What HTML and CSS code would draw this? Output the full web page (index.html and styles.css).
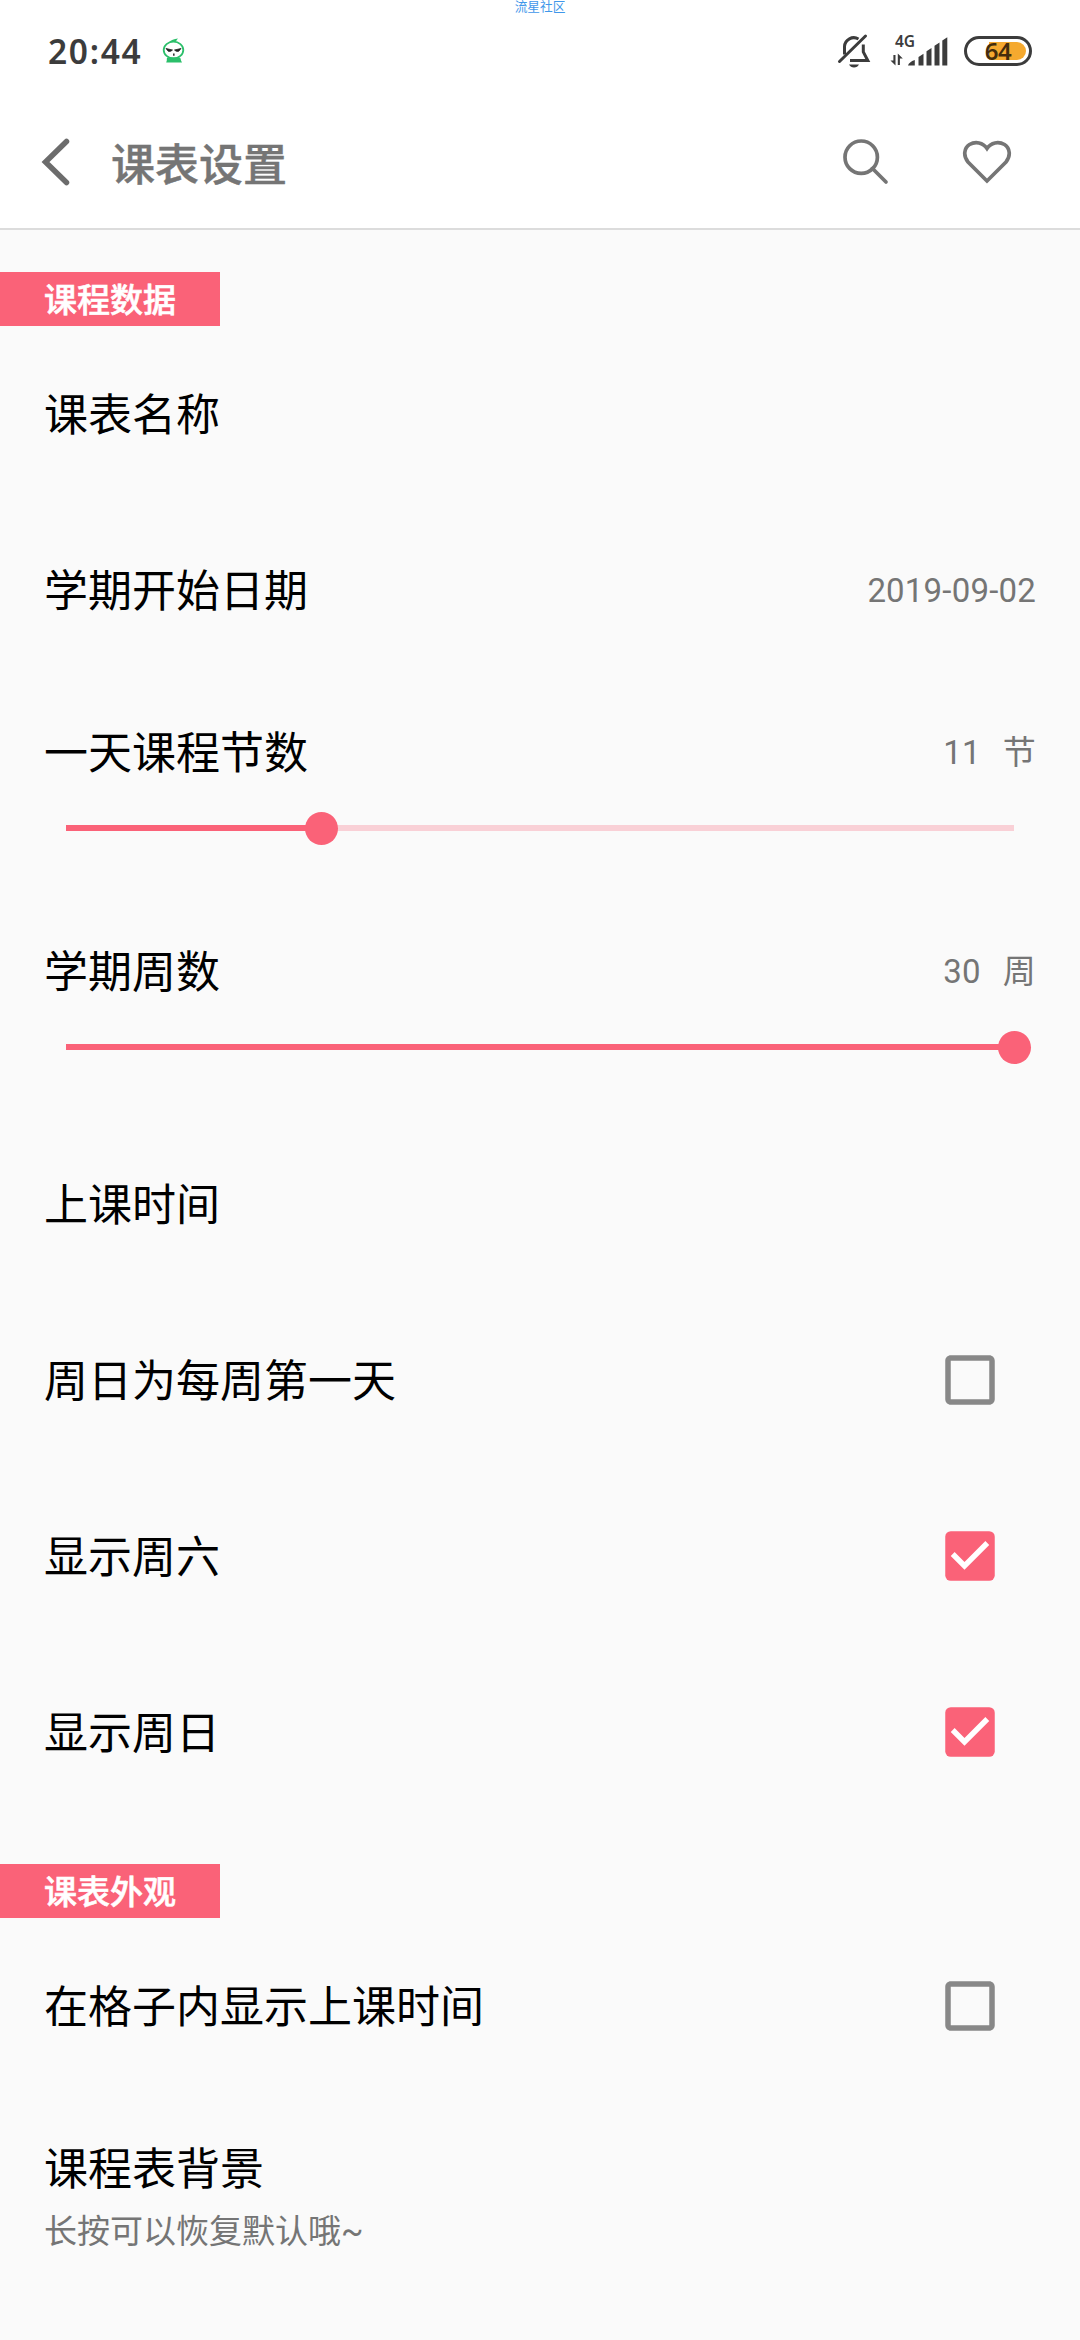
FILE: index.html
```html
<!DOCTYPE html>
<html lang="zh-CN">
<head>
<meta charset="utf-8">
<title>课表设置</title>
<link rel="stylesheet" href="styles.css">
</head>
<body>
<div class="watermark">流星社区</div>
<header class="top">
  <div class="statusbar">
    <span class="clock">20:44</span>
    <svg class="mascot" width="24" height="26" viewBox="0 0 24 26">
      <path d="M7 4.500Q10 1 16 .6Q14.500 2 14 3.500L10 5z" fill="#2bbf6a"/>
      <ellipse cx="11.500" cy="12" rx="9.800" ry="8.300" fill="#fff" stroke="#2bbf6a" stroke-width="1.800"/>
      <path d="M5 19.500h13q.8 1 1 3l1 2H4.200l.6-2q0-2 .2-3z" fill="#2bbf6a"/>
      <path d="M4 10.500l6.500 1.500q-1.500 2-4.300 1.200zM19 10.500L12.500 12q1.500 2 4.300 1.200z" fill="#222" stroke="#222" stroke-width=".8"/>
      <path d="M11 15.500h1.600v2.200H11z" fill="#333"/>
    </svg>
    <span class="spacer"></span>
    <svg class="bell" width="34" height="36" viewBox="0 0 34 36" fill="none" stroke="#3c3c3c" stroke-width="3">
      <path d="M7.500 21.500V13.500A9.300 9.300 0 0 1 21.500 6M26.300 11.500V19l4.500 8.500H13"/>
      <path d="M2.500 28.500L28.500 3" stroke-linecap="round"/>
      <path d="M12 31.500h10q-1.500 3-5 3t-5-3z" fill="#3c3c3c" stroke="none"/>
    </svg>
    <span class="network">
      <span class="network-type">4G</span>
      <svg width="58" height="34" viewBox="0 0 58 34" fill="#3c3c3c">
        <path d="M5.500 21V31.500L.5 26.500H3.400V21zM7.800 31V19.500l5 5H9.900V31z"/>
        <path d="M18 31.500Q19 28 24.800 26V31.500zM28.500 23l5-3.200V31.500h-5zM36.500 17.200l5-3.200V31.500h-5zM44.500 11.700l5-3.200V31.500h-5zM52.300 6.400l5-3.200V31.500h-5z"/>
      </svg>
    </span>
    <span class="battery"><span class="battery-fill"></span><span class="battery-text">64</span></span>
  </div>
  <div class="appbar">
    <svg class="back" width="30" height="50" viewBox="0 0 30 50" fill="none" stroke="#6c6c6c" stroke-width="5.500" stroke-linecap="round"><path d="M25.500 4.500L4.500 25l21 20.500"/></svg>
    <h1 class="title">课表设置</h1>
    <svg class="search" width="46" height="46" viewBox="0 0 46 46" fill="none" stroke="#757575" stroke-width="3.700"><circle cx="18.200" cy="18.200" r="16.200"/><path d="M29.500 29.500L43 43" stroke-linecap="round"/></svg>
    <svg class="heart" width="50" height="44" viewBox="0 0 50 44" fill="none" stroke="#757575" stroke-width="3.700"><path d="M25 41L6 22C1 16 2 8 7.500 4.500C13.500 1 21 2.500 25 8.500C29 2.500 36.500 1 42.500 4.500C48 8 49 16 44 22z"/></svg>
  </div>
</header>
<main class="content">
  <section class="group">
    <h2 class="tag">课程数据</h2>
    <div class="row"><span class="label">课表名称</span></div>
    <div class="row"><span class="label">学期开始日期</span><span class="value">2019-09-02</span></div>
    <div class="row-slider">
      <div class="line"><span class="label">一天课程节数</span><span class="value">11<span class="unit">节</span></span></div>
      <div class="track"><div class="fill" style="width: 26.900%"><span class="thumb"></span></div></div>
    </div>
    <div class="row-slider">
      <div class="line"><span class="label">学期周数</span><span class="value">30<span class="unit">周</span></span></div>
      <div class="track"><div class="fill" style="width: 100%"><span class="thumb"></span></div></div>
    </div>
    <div class="row"><span class="label">上课时间</span></div>
    <div class="row"><span class="label">周日为每周第一天</span>
      <svg class="check" viewBox="0 0 24 24"><path d="M19 5v14H5V5h14m0-2H5c-1.100 0-2 .9-2 2v14c0 1.100.9 2 2 2h14c1.100 0 2-.9 2-2V5c0-1.100-.9-2-2-2z"/></svg></div>
    <div class="row"><span class="label">显示周六</span>
      <svg class="check checked" viewBox="0 0 24 24"><rect x="3" y="3" width="18" height="18" rx="2"/><path class="tick" d="M10 17l-5-5 1.410-1.410L10 14.170l7.590-7.590L19 8z"/></svg></div>
    <div class="row"><span class="label">显示周日</span>
      <svg class="check checked" viewBox="0 0 24 24"><rect x="3" y="3" width="18" height="18" rx="2"/><path class="tick" d="M10 17l-5-5 1.410-1.410L10 14.170l7.590-7.590L19 8z"/></svg></div>
  </section>
  <section class="group">
    <h2 class="tag">课表外观</h2>
    <div class="row"><span class="label">在格子内显示上课时间</span>
      <svg class="check" viewBox="0 0 24 24"><path d="M19 5v14H5V5h14m0-2H5c-1.100 0-2 .9-2 2v14c0 1.100.9 2 2 2h14c1.100 0 2-.9 2-2V5c0-1.100-.9-2-2-2z"/></svg></div>
    <div class="row-detail"><span class="label">课程表背景</span><span class="hint">长按可以恢复默认哦~</span></div>
  </section>
</main>
</body>
</html>
```
FILE: styles.css
```css
* { box-sizing: border-box; }
body {
  margin: 0;
  width: 1080px;
  height: 2340px;
  overflow: hidden;
  background: #fafafa;
  color: #000;
  font-family: Roboto, "Noto Sans CJK SC", sans-serif;
}
svg { display: block; flex: none; }

.watermark {
  position: absolute;
  top: 0;
  left: 0;
  width: 1080px;
  text-align: center;
  font-size: 12.700px;
  line-height: 13px;
  color: #3f97ea;
}

.top {
  height: 230px;
  background: #fff;
  border-bottom: 2px solid #dcdcdc;
}
.statusbar {
  display: flex;
  align-items: center;
  height: 102px;
  padding: 0 48px;
}
.clock {
  font: 600 33.500px/40px "Noto Sans", sans-serif;
  letter-spacing: 1.700px;
  color: #3c3c3c;
}
.mascot { margin-left: 20px; }
.spacer { flex: 1; }
.bell { margin-right: 19px; }
.network { position: relative; margin-right: 16px; }
.network-type {
  position: absolute;
  left: 5px;
  top: -2px;
  font: 600 15.500px/18px "Noto Sans", sans-serif;
  color: #3c3c3c;
}
.battery {
  position: relative;
  display: flex;
  align-items: center;
  justify-content: center;
  width: 68px;
  height: 30px;
  border: 3px solid #3c3c3c;
  border-radius: 15px;
}
.battery-fill {
  position: absolute;
  right: 3px;
  top: 3px;
  width: 37px;
  height: 18px;
  border-radius: 0 9px 9px 0;
  background: #f5a92f;
}
.battery-text {
  position: relative;
  font: 600 24px/24px "Noto Sans", sans-serif;
  letter-spacing: -.5px;
  color: #442c0c;
}

.appbar {
  display: flex;
  align-items: center;
  height: 120px;
  padding: 0 68px 0 41px;
}
.title {
  flex: 1;
  margin: 0 0 0 40px;
  padding-top: 7px;
  font-size: 44px;
  line-height: 60px;
  font-weight: 500;
  -webkit-text-stroke: .4px #757575;
  color: #757575;
}
.heart { margin-left: 73px; }

.group { padding-top: 42px; }
.group + .group { padding-top: 44px; }
.tag {
  display: flex;
  align-items: center;
  width: 220px;
  height: 54px;
  margin: 0;
  padding: 3px 0 0 44px;
  background: #fa6278;
  color: #fff;
  font-size: 33px;
  line-height: 51px;
  font-weight: 500;
  -webkit-text-stroke: .6px #fff;
}
.row {
  display: flex;
  align-items: center;
  justify-content: space-between;
  height: 176px;
  padding: 0 44px;
}
.label { padding-top: 4px; font-size: 44px; line-height: 60px; }
.value { padding-top: 2px; font-size: 33px; line-height: 44px; letter-spacing: .2px; color: #757575; }
.unit { margin-left: 22px; }
.row-slider { height: 219px; padding: 44px 44px 0; }
.line {
  display: flex;
  align-items: center;
  justify-content: space-between;
  height: 60px;
}
.track {
  height: 6px;
  margin: 43px 22px 0;
  background: #f9d0d6;
}
.fill { position: relative; height: 6px; background: #fa6278; }
.thumb {
  position: absolute;
  right: -16.500px;
  top: -13.500px;
  width: 33px;
  height: 33px;
  border-radius: 50%;
  background: #fa6278;
}
.check { width: 66px; height: 66px; margin-right: 33px; fill: #888; }
.checked { fill: #fa6278; }
.tick { fill: #fff; }
.row-detail {
  display: flex;
  flex-direction: column;
  padding: 42px 44px 0;
}
.hint { margin-top: 10px; font-size: 33px; line-height: 44px; color: #757575; }
```
